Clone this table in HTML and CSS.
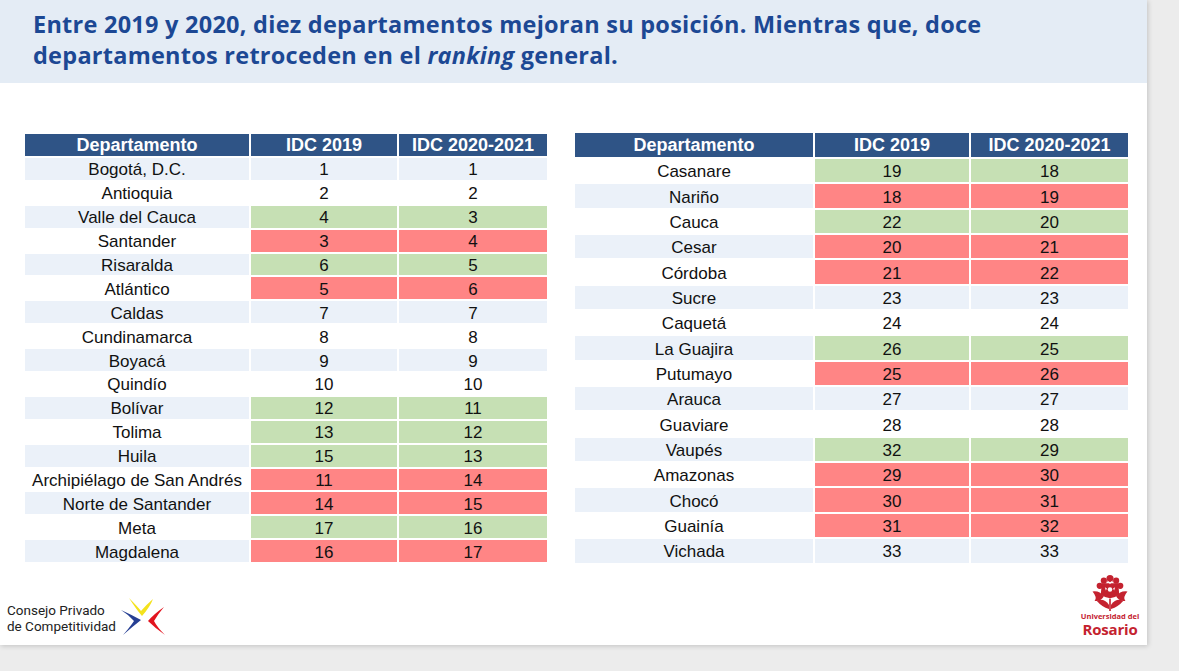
FILE: index.html
```html
<!DOCTYPE html>
<html lang="es">
<head>
<meta charset="utf-8">
<link rel="stylesheet" href="styles.css">
</head>
<body>
<div class="slide">
  <div class="header">
    <h1 class="title">Entre 2019 y 2020, diez departamentos mejoran su posición. Mientras que, doce<br>departamentos retroceden en el <em>ranking</em> general.</h1>
  </div>
  <div class="main">
    <div class="grid grid-left">
      <div class="th">Departamento</div><div class="th">IDC 2019</div><div class="th">IDC 2020-2021</div>
      <div class="td b">Bogotá, D.C.</div><div class="td b">1</div><div class="td b">1</div>
      <div class="td">Antioquia</div><div class="td">2</div><div class="td">2</div>
      <div class="td b">Valle del Cauca</div><div class="td g">4</div><div class="td g">3</div>
      <div class="td">Santander</div><div class="td r">3</div><div class="td r">4</div>
      <div class="td b">Risaralda</div><div class="td g">6</div><div class="td g">5</div>
      <div class="td">Atlántico</div><div class="td r">5</div><div class="td r">6</div>
      <div class="td b">Caldas</div><div class="td b">7</div><div class="td b">7</div>
      <div class="td">Cundinamarca</div><div class="td">8</div><div class="td">8</div>
      <div class="td b">Boyacá</div><div class="td b">9</div><div class="td b">9</div>
      <div class="td">Quindío</div><div class="td">10</div><div class="td">10</div>
      <div class="td b">Bolívar</div><div class="td g">12</div><div class="td g">11</div>
      <div class="td">Tolima</div><div class="td g">13</div><div class="td g">12</div>
      <div class="td b">Huila</div><div class="td g">15</div><div class="td g">13</div>
      <div class="td">Archipiélago de San Andrés</div><div class="td r">11</div><div class="td r">14</div>
      <div class="td b">Norte de Santander</div><div class="td r">14</div><div class="td r">15</div>
      <div class="td">Meta</div><div class="td g">17</div><div class="td g">16</div>
      <div class="td b">Magdalena</div><div class="td r">16</div><div class="td r">17</div>
    </div>
    <div class="grid grid-right">
      <div class="th">Departamento</div><div class="th">IDC 2019</div><div class="th">IDC 2020-2021</div>
      <div class="td">Casanare</div><div class="td g">19</div><div class="td g">18</div>
      <div class="td b">Nariño</div><div class="td r">18</div><div class="td r">19</div>
      <div class="td">Cauca</div><div class="td g">22</div><div class="td g">20</div>
      <div class="td b">Cesar</div><div class="td r">20</div><div class="td r">21</div>
      <div class="td">Córdoba</div><div class="td r">21</div><div class="td r">22</div>
      <div class="td b">Sucre</div><div class="td b">23</div><div class="td b">23</div>
      <div class="td">Caquetá</div><div class="td">24</div><div class="td">24</div>
      <div class="td b">La Guajira</div><div class="td g">26</div><div class="td g">25</div>
      <div class="td">Putumayo</div><div class="td r">25</div><div class="td r">26</div>
      <div class="td b">Arauca</div><div class="td b">27</div><div class="td b">27</div>
      <div class="td">Guaviare</div><div class="td">28</div><div class="td">28</div>
      <div class="td b">Vaupés</div><div class="td g">32</div><div class="td g">29</div>
      <div class="td">Amazonas</div><div class="td r">29</div><div class="td r">30</div>
      <div class="td b">Chocó</div><div class="td r">30</div><div class="td r">31</div>
      <div class="td">Guainía</div><div class="td r">31</div><div class="td r">32</div>
      <div class="td b">Vichada</div><div class="td b">33</div><div class="td b">33</div>
    </div>
  </div>
  <div class="footer">
    <div class="cpc">
      <div class="cpc-text">Consejo Privado<br>de Competitividad</div>
      <svg class="cpc-logo" width="48" height="40" viewBox="0 0 48 40">
        <path d="M9 1 Q18 10 21 14 Q26 8 33 2 Q30 10 22 19 Q16 12 9 1 Z" fill="#f4e21c"/>
        <path d="M1 13 Q12 18 21 23 Q12 30 3 38 Q10 30 14 24 Q9 18 1 13 Z" fill="#263f93"/>
        <path d="M44 10 Q34 17 28 24 Q35 31 45 38 Q37 30 34 24 Q38 17 44 10 Z" fill="#e2141f"/>
      </svg>
    </div>
    <div class="rosario">
      <svg class="crest" width="38" height="37" viewBox="0 0 36 36">
        <g fill="#c4222f">
          <circle cx="18" cy="4.5" r="3.5"/>
          <circle cx="12" cy="6.5" r="3"/>
          <circle cx="24" cy="6.5" r="3"/>
          <circle cx="8" cy="11.5" r="3"/>
          <circle cx="28" cy="11.5" r="3"/>
          <path d="M10 9 H26 L27 20 Q18 27 9 20 Z"/>
          <path d="M1 17 Q8 16 12 22 Q9 27 3 26 Q6 23 1 17 Z"/>
          <path d="M35 17 Q28 16 24 22 Q27 27 33 26 Q30 23 35 17 Z"/>
          <path d="M5 26 Q12 23 17 30 L17 34 Q10 32 5 26 Z"/>
          <path d="M31 26 Q24 23 19 30 L19 34 Q26 32 31 26 Z"/>
          <rect x="17.2" y="24" width="1.6" height="12"/>
        </g>
        <g fill="#fff">
          <circle cx="18" cy="15" r="2.2"/>
          <path d="M13 13 L15 14 L14 16 Z M23 13 L21 14 L22 16 Z M15 6 L18 8 L21 6 L18 10 Z"/>
        </g>
      </svg>
      <div class="uni">Universidad del</div>
      <div class="ros">Rosario</div>
    </div>
  </div>
</div>
</body>
</html>
```
FILE: styles.css
```css
html, body {
  margin: 0;
  padding: 0;
}
body {
  background: #ececec;
  width: 1179px;
  height: 671px;
  overflow: hidden;
}
.slide {
  width: 1147px;
  height: 645px;
  background: #ffffff;
  display: flex;
  flex-direction: column;
  box-shadow: 1px 1px 5px rgba(0, 0, 0, 0.18);
}
.header {
  height: 83px;
  box-sizing: border-box;
  background: #e4ecf5;
  padding: 9px 0 0 33px;
}
.title {
  margin: 0;
  font-family: "Open Sans", Lato, sans-serif;
  font-weight: 700;
  font-size: 23.5px;
  letter-spacing: 0.25px;
  line-height: 31px;
  color: #1c4894;
}
.title em {
  font-style: italic;
}
.main {
  display: flex;
  align-items: flex-start;
  padding: 50px 0 0 25px;
  height: 436px;
  box-sizing: border-box;
  flex: none;
}
.grid {
  display: grid;
  gap: 2px;
  font-family: "Liberation Sans", Arial, sans-serif;
  color: #111;
}
.grid-left {
  margin-top: 1px;
  grid-template-columns: 224px 146px 148px;
  grid-template-rows: 22px;
  grid-auto-rows: 21.9px;
}
.grid-right {
  margin-left: 28px;
  grid-template-columns: 238px 154px 157px;
  grid-template-rows: 24px;
  grid-auto-rows: 23.35px;
}
.th {
  background: #2f5486;
  color: #fff;
  font-weight: 700;
  font-size: 18px;
  display: flex;
  align-items: center;
  justify-content: center;
  white-space: nowrap;
  padding-top: 1px;
}
.td {
  font-size: 17px;
  display: flex;
  align-items: center;
  justify-content: center;
  white-space: nowrap;
  background: #ffffff;
  padding-top: 3px;
  box-sizing: border-box;
}
.td.b { background: #ebf1f9; }
.td.g { background: #c6e0b4; }
.td.r { background: #ff8585; }
.footer {
  flex: 1;
  display: flex;
  justify-content: space-between;
  align-items: flex-end;
  padding: 0 9px 7px 7px;
}
.cpc {
  display: flex;
  align-items: flex-end;
  gap: 4px;
  margin-bottom: 1px;
}
.cpc-text {
  font-family: Roboto, "Liberation Sans", sans-serif;
  font-size: 13.5px;
  line-height: 16px;
  color: #222;
  padding-bottom: 3px;
}
.cpc-logo {
  display: block;
}
.rosario {
  display: flex;
  flex-direction: column;
  align-items: center;
  width: 56px;
  color: #c4222f;
  font-family: "Open Sans", "Liberation Sans", sans-serif;
  font-weight: 700;
}
.crest {
  display: block;
  margin-bottom: 1px;
}
.uni {
  font-size: 7.5px;
  line-height: 9px;
  white-space: nowrap;
}
.ros {
  font-size: 15px;
  line-height: 17px;
  letter-spacing: -0.2px;
}
```
